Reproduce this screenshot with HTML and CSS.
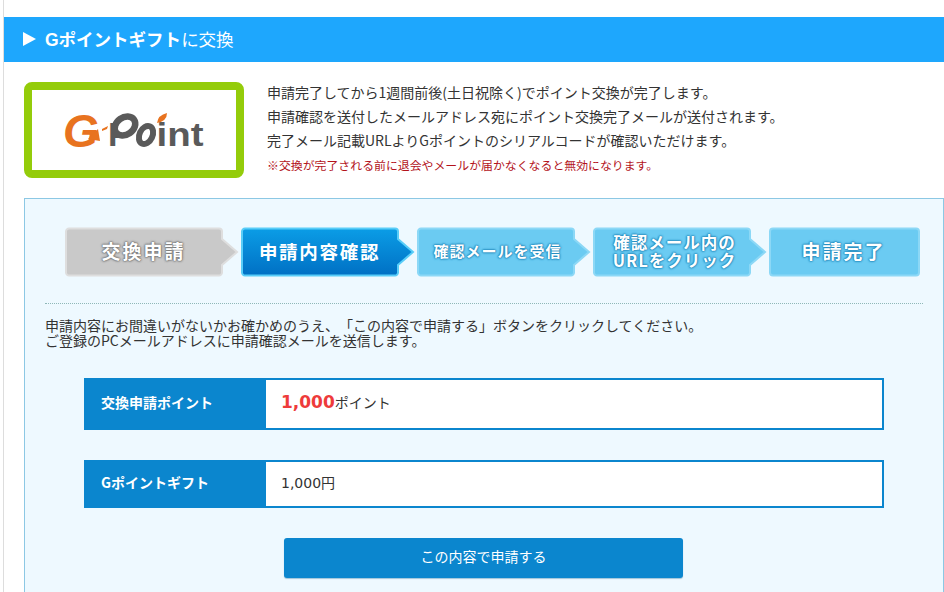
FILE: index.html
```html
<!DOCTYPE html>
<html lang="ja">
<head>
  <meta charset="UTF-8" />
  <meta name="viewport" content="width=device-width, initial-scale=1.0"/>
  <title>Gポイントギフトに交換</title>
  <link rel="stylesheet" href="styles.css">
</head>
<body>
  <div class="page">

    <h2 class="title-bar">
      <span class="title-arrow"></span>
      <span class="title-text"><strong>Gポイントギフト</strong>に交換</span>
    </h2>

    <div class="intro">
      <div class="logo-box">
        <svg class="logo" width="140" height="60" viewBox="0 -12 140 60">
          <text class="logo-g" x="-1" y="35">G</text>
          <path d="M24 27 L34 17 L36 29Z" fill="#e8731f"/>
          <path d="M38 17 L44 14 L43 17 L38 19Z" fill="#e8731f"/>
          <text class="logo-p" x="44" y="34">P</text>
          <ellipse cx="61" cy="14" rx="11" ry="8.500" fill="#fff" stroke="#5a5a5a" stroke-width="6.500" transform="rotate(-35 61 14)"/>
          <ellipse cx="82" cy="23" rx="6.500" ry="9.500" fill="#fff" stroke="#5a5a5a" stroke-width="6" transform="rotate(25 82 23)"/>
          <text class="logo-int" x="92.500" y="33.500" textLength="47" lengthAdjust="spacingAndGlyphs">int</text>
          <path d="M93 11 Q94 3 103 1 Q103 9 93 11Z" fill="#e8731f"/>
        </svg>
      </div>
      <div class="intro-text">
        <p>申請完了してから1週間前後(土日祝除く)でポイント交換が完了します。</p>
        <p>申請確認を送付したメールアドレス宛にポイント交換完了メールが送付されます。</p>
        <p>完了メール記載URLよりGポイントのシリアルコードが確認いただけます。</p>
        <p class="notice">※交換が完了される前に退会やメールが届かなくなると無効になります。</p>
      </div>
    </div>

    <div class="confirm-box">
      <ol class="steps">
        <li class="step step-done">
          <svg class="step-bg" viewBox="0 0 175 50" width="175" height="50"><path d="M4 1.500H154a3 3 0 0 1 3 3V12L172 25L157 38V45.500a3 3 0 0 1-3 3H4a3 3 0 0 1-3-3V4.500a3 3 0 0 1 3-3Z"/></svg>
          <span>交換申請</span>
        </li>
        <li class="step step-current">
          <svg class="step-bg" viewBox="0 0 175 50" width="175" height="50">
            <defs><linearGradient id="cur" x1="0" y1="0" x2="0" y2="1"><stop offset="0" stop-color="#0b9de6"/><stop offset="1" stop-color="#0070c4"/></linearGradient></defs>
            <path fill="url(#cur)" d="M4 1.500H154a3 3 0 0 1 3 3V12L172 25L157 38V45.500a3 3 0 0 1-3 3H4a3 3 0 0 1-3-3V4.500a3 3 0 0 1 3-3Z"/>
          </svg>
          <span>申請内容確認</span>
        </li>
        <li class="step step-next step-mail">
          <svg class="step-bg" viewBox="0 0 175 50" width="175" height="50"><path d="M4 1.500H154a3 3 0 0 1 3 3V12L172 25L157 38V45.500a3 3 0 0 1-3 3H4a3 3 0 0 1-3-3V4.500a3 3 0 0 1 3-3Z"/></svg>
          <span>確認メールを受信</span>
        </li>
        <li class="step step-next step-click">
          <svg class="step-bg" viewBox="0 0 175 50" width="175" height="50"><path d="M4 1.500H154a3 3 0 0 1 3 3V12L172 25L157 38V45.500a3 3 0 0 1-3 3H4a3 3 0 0 1-3-3V4.500a3 3 0 0 1 3-3Z"/></svg>
          <span>確認メール内の<br>URLをクリック</span>
        </li>
        <li class="step step-next step-last">
          <svg class="step-bg" viewBox="0 0 151 50" width="151" height="50"><rect x="1" y="1.500" width="149" height="47" rx="3"/></svg>
          <span>申請完了</span>
        </li>
      </ol>

      <p class="lead">申請内容にお間違いがないかお確かめのうえ、「この内容で申請する」ボタンをクリックしてください。<br>ご登録のPCメールアドレスに申請確認メールを送信します。</p>

      <dl class="info-row info-big">
        <dt>交換申請ポイント</dt>
        <dd><em>1,000</em>ポイント</dd>
      </dl>
      <dl class="info-row">
        <dt>Gポイントギフト</dt>
        <dd class="info-yen">1,000円</dd>
      </dl>

      <div class="button-container">
        <button type="button">この内容で申請する</button>
      </div>
    </div>

  </div>
</body>
</html>
```

FILE: styles.css
```css
html, body {
  overflow: hidden;
}
body {
  font-family: 'Noto Sans CJK JP', 'Noto Sans', sans-serif;
  background-color: #fff;
  color: #333;
  margin: 0;
  padding: 0;
}
.page {
  margin-left: 3px;
  padding-top: 17px;
  padding-bottom: 40px;
  border-left: 1px solid #ddd;
}
.title-bar {
  display: flex;
  align-items: center;
  height: 45px;
  margin: 0;
  padding-left: 19px;
  background-color: #1ea7fd;
  color: #fff;
  font-size: 17.500px;
  font-weight: normal;
}
.title-text {
  padding-bottom: 3px;
}
.title-bar strong {
  font-family: 'Liberation Sans', 'Noto Sans CJK JP', sans-serif;
  font-weight: bold;
}
.title-arrow {
  width: 0;
  height: 0;
  margin: 0 9px 2px 0;
  border-left: 13px solid #fff;
  border-top: 7px solid transparent;
  border-bottom: 7px solid transparent;
}
.intro {
  display: flex;
  margin: 20px 0 20px 20px;
}
.logo-box {
  display: flex;
  align-items: center;
  justify-content: center;
  box-sizing: border-box;
  width: 220px;
  height: 96px;
  border: 8px solid #94cc0a;
  border-radius: 8px;
  background-color: #fff;
}
.logo text {
  font-family: 'Liberation Sans', sans-serif;
  font-weight: bold;
}
.logo-g {
  font-size: 46px;
  font-style: italic;
  fill: #e8731f;
}
.logo-p {
  font-size: 34px;
  fill: #5a5a5a;
}
.logo-int {
  font-size: 34px;
  fill: #5a5a5a;
}
.intro-text {
  margin: -2px 0 0 23px;
  font-size: 14px;
}
.intro-text p {
  height: 24px;
  margin: 0;
  line-height: 24px;
}
.intro-text .notice {
  padding-top: 1px;
  color: #b3131b;
  font-size: 11.900px;
}
.confirm-box {
  box-sizing: border-box;
  width: 920px;
  margin-left: 20px;
  padding: 28px 20px 40px;
  border: 1px solid #8cc8e4;
  background-color: #eef9ff;
}
.steps {
  display: flex;
  gap: 1px;
  margin: 0;
  padding: 0 0 26px 20px;
  border-bottom: 1px dotted #8fb8b8;
  list-style: none;
}
.step {
  position: relative;
  display: flex;
  align-items: center;
  justify-content: center;
  box-sizing: border-box;
  width: 175px;
  height: 50px;
  padding: 0 18px 2px 0;
  color: #fff;
  font-size: 19px;
  font-weight: bold;
  line-height: 18px;
  letter-spacing: 2px;
  text-align: center;
  white-space: nowrap;
}
.step span {
  position: relative;
}
.step-bg {
  position: absolute;
  left: 0;
  top: 0;
}
.step-done .step-bg path {
  fill: #c9c9c9;
  stroke: #dedede;
  stroke-width: 2;
}
.step-done span {
  text-shadow: 0 0 1px #777, 0 0 2px #777, 0 0 2px #777, 0 0 3px #888;
}
.step-current {
  font-size: 18.500px;
  letter-spacing: 1.700px;
}
.step-current .step-bg path {
  stroke: #58cdf8;
  stroke-width: 2;
}
.step-next .step-bg path,
.step-next .step-bg rect {
  fill: #6bcbf2;
  stroke: #8cd8f6;
  stroke-width: 2;
}
.step-next span {
  text-shadow: 0 0 1px #1f86ba, 0 0 2px #1f86ba, 0 0 2px #1f86ba, 0 0 3px #3298c8;
}
.step-mail {
  padding-right: 14px;
  font-size: 15px;
  letter-spacing: 1px;
}
.step-click {
  padding-right: 12px;
  font-size: 16.500px;
  letter-spacing: 1px;
}
.step-last {
  width: 151px;
  padding-right: 2px;
}
.lead {
  margin: 14px 0 0;
  font-size: 14px;
  line-height: 15px;
  text-spacing-trim: space-all;
}
.info-row {
  display: flex;
  box-sizing: border-box;
  width: 800px;
  height: 48px;
  margin: 30px 0 0 39px;
  border: 2px solid #0b86ce;
  background-color: #0b86ce;
}
.info-big {
  height: 52px;
  margin-top: 30px;
}
.info-row dt {
  display: flex;
  align-items: center;
  width: 180px;
  padding: 0 0 4px 15px;
  box-sizing: border-box;
  color: #fff;
  font-size: 14px;
  font-weight: bold;
}
.info-row dd {
  display: flex;
  align-items: center;
  flex: 1;
  margin: 0;
  padding: 0 0 4px 15px;
  background-color: #fff;
  font-size: 14px;
}
.info-row em {
  color: #ee3b3b;
  font-family: 'DejaVu Sans', sans-serif;
  font-size: 17px;
  font-style: normal;
  font-weight: bold;
}
.info-row .info-yen {
  font-family: 'DejaVu Sans', 'Noto Sans CJK JP', sans-serif;
}
.button-container {
  margin: 30px 0 0 239px;
}
button {
  width: 399px;
  height: 40px;
  padding: 0 0 4px;
  border: none;
  border-radius: 3px;
  background-color: #0b86ce;
  box-shadow: 0 1px 1px #9ec4da;
  color: #fff;
  font-family: inherit;
  font-size: 14px;
  cursor: pointer;
}
```
